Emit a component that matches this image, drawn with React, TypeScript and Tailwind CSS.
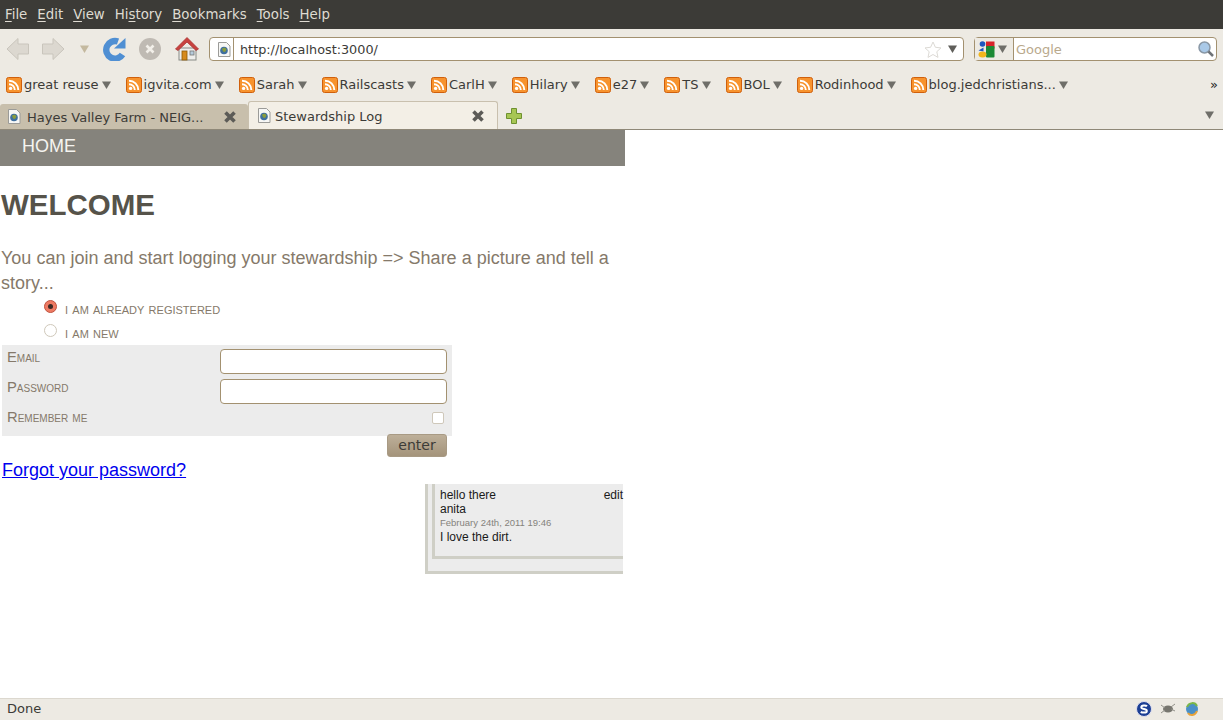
import { ReactNode } from "react";

const uiFont = "font-['DejaVu_Sans',sans-serif]";

const menus: [string, string, string][] = [
  ["", "F", "ile"],
  ["", "E", "dit"],
  ["", "V", "iew"],
  ["Hi", "s", "tory"],
  ["", "B", "ookmarks"],
  ["", "T", "ools"],
  ["", "H", "elp"],
];

const feeds = [
  "great reuse",
  "igvita.com",
  "Sarah",
  "Railscasts",
  "CarlH",
  "Hilary",
  "e27",
  "TS",
  "BOL",
  "Rodinhood",
  "blog.jedchristians...",
];

function Caret({ className = "" }: { className?: string }) {
  return (
    <svg width="9" height="8" viewBox="0 0 9 8" className={className}>
      <path d="M0 0.5h9L4.5 8z" fill="currentColor" />
    </svg>
  );
}

function FeedIcon() {
  return (
    <svg width="16" height="16" viewBox="0 0 16 16" className="shrink-0">
      <rect x="0.5" y="0.5" width="15" height="15" rx="2" fill="#f7932e" stroke="#d0600c" />
      <circle cx="4.6" cy="11.4" r="1.7" fill="#fff" />
      <path d="M3 7.2a5.800 5.800 0 0 1 5.800 5.800M3 3.700A9.300 9.300 0 0 1 12.300 13" fill="none" stroke="#fff" strokeWidth="1.900" />
    </svg>
  );
}

function PageIcon() {
  return (
    <svg width="14" height="15" viewBox="0 0 14 15" className="shrink-0">
      <path d="M1.500 0.500h8l3.500 3.500v10.500h-11.500z" fill="#f7f7f5" stroke="#9b9b98" />
      <circle cx="7" cy="8.500" r="3.800" fill="#3e6f9f" />
      <path d="M5 6.500l3-1 1.500 2-1.500 2.500-2-.5z" fill="#8a9d3a" />
    </svg>
  );
}

function CloseX({ className = "" }: { className?: string }) {
  return (
    <svg width="14" height="14" viewBox="0 0 14 14" className={className}>
      <path d="M2.500 2.500l9 9M11.500 2.500l-9 9" stroke="#5c5b57" strokeWidth="3.600" />
    </svg>
  );
}

function ArrowIcon({ flip = false }: { flip?: boolean }) {
  return (
    <svg width="24" height="24" viewBox="0 0 24 24" className={flip ? "scale-x-[-1]" : ""}>
      <path d="M1 12L12 1.500V7h10.500v10H12v5.500z" fill="#dcd8d0" stroke="#c9c5bc" />
    </svg>
  );
}

function ReloadIcon() {
  return (
    <svg width="24" height="24" viewBox="0 0 24 24">
      <path d="M19.500 17.500A8.800 8.800 0 1 1 15 4.500" fill="none" stroke="#4f8fd3" strokeWidth="6.400" />
      <path d="M11 11.500L22.500 11.500V1z" fill="#4f8fd3" />
    </svg>
  );
}

function StopIcon() {
  return (
    <svg width="22" height="22" viewBox="0 0 22 22">
      <circle cx="11" cy="11" r="11" fill="#bfbab3" />
      <path d="M7.500 7.500l7 7M14.500 7.500l-7 7" stroke="#f2efe9" strokeWidth="2.600" />
    </svg>
  );
}

function HomeIcon() {
  return (
    <svg width="24" height="24" viewBox="0 0 24 24">
      <rect x="4" y="11" width="17" height="12" fill="#eeeeec" stroke="#888a85" />
      <path d="M0.500 12L12 0.500 23.500 12l-2.500 1.500L12 5 3 13.500z" fill="#c8423f" stroke="#a33" strokeWidth="0.800" />
      <rect x="7" y="14" width="5" height="9" fill="#d68a1c" stroke="#8f5902" strokeWidth="0.800" />
      <rect x="15" y="14" width="4" height="4" fill="#b6cbdc" stroke="#777" strokeWidth="0.800" />
    </svg>
  );
}

function GoogleIcon() {
  return (
    <svg width="17" height="17" viewBox="0 0 17 17">
      <rect x="8" y="0.500" width="8.500" height="7" fill="#d8232a" />
      <rect x="8" y="5" width="8.500" height="11.500" rx="1" fill="#1c8a35" />
      <circle cx="4.500" cy="3" r="2.800" fill="#1f55c0" />
      <path d="M0.500 9.500l5-3v4z" fill="#1f55c0" />
      <ellipse cx="4.500" cy="13.500" rx="4" ry="3" fill="#f2b61d" />
    </svg>
  );
}

function SearchIcon() {
  return (
    <svg width="16" height="16" viewBox="0 0 16 16">
      <circle cx="6.500" cy="6.500" r="5.500" fill="#a9c9e8" stroke="#8a98a6" strokeWidth="1.500" />
      <path d="M10.500 10.500l4.500 4.500" stroke="#6f7378" strokeWidth="2.500" />
    </svg>
  );
}

function Tab({ title, active, children }: { title: string; active?: boolean; children?: ReactNode }) {
  return (
    <div
      className={
        active
          ? "flex h-[28px] w-[250px] items-center gap-[4px] self-end rounded-t-[3px] border-x border-t border-[#c9c0ae] bg-[#f3efe6] pl-[8px]"
          : "flex h-[25px] w-[248px] items-center gap-[6px] self-end rounded-t-[3px] bg-[#c8bfac] pl-[7px]"
      }
    >
      <PageIcon />
      <span className="flex-1 truncate pt-[2px] text-[13px] text-[#3c3b37]">{title}</span>
      {children}
    </div>
  );
}

function Field({ label }: { label: string }) {
  return (
    <div className="flex h-[30px] justify-between pl-[5px] pr-[5px]">
      <span className="text-[14.75px] leading-[24px] text-[#85796a] [font-variant:small-caps]">{label}</span>
      <input type="text" className="mt-[4px] h-[25px] w-[227px] rounded-[4px] border border-[#a39170] bg-white" />
    </div>
  );
}

export default function App() {
  return (
    <div className={`flex h-[720px] w-[1223px] flex-col overflow-hidden bg-white ${uiFont}`}>
      {/* Menu bar */}
      <div className="flex h-[29px] shrink-0 items-center gap-[10px] bg-[#3c3b37] pl-[5px] text-[13.33px] text-[#dfdbd2]">
        {menus.map(([pre, key, rest]) => (
          <span key={pre + key + rest}>
            {pre}
            <span className="underline decoration-1 underline-offset-2">{key}</span>
            {rest}
          </span>
        ))}
      </div>

      {/* Navigation toolbar */}
      <div className="flex h-[40px] shrink-0 items-center bg-[#edeae3] pl-[6px] pr-[6px]">
        <ArrowIcon />
        <div className="ml-[11px]">
          <ArrowIcon flip />
        </div>
        <Caret className="ml-[15px] text-[#c4b99f]" />
        <div className="ml-[14px]">
          <ReloadIcon />
        </div>
        <div className="ml-[12px]">
          <StopIcon />
        </div>
        <div className="ml-[14px]">
          <HomeIcon />
        </div>
        <div className="ml-[10px] flex h-[24px] w-[755px] items-center rounded-[4px] border border-[#a39170] bg-white pl-[7px] pr-[6px]">
          <PageIcon />
          <div className="ml-[2px] h-[22px] w-px bg-[#a39170]" />
          <span className="ml-[6px] flex-1 pt-[1px] text-[12.8px] text-[#3c3b37]">http://localhost:3000/</span>
          <svg width="18" height="17" viewBox="0 0 18 17" className="mr-[6px]">
            <path d="M9 1l2.400 5.300 5.600.6-4.200 3.800 1.200 5.700L9 13.500 4 16.400l1.200-5.700L1 6.900l5.600-.6z" fill="#fff" stroke="#dcdad5" />
          </svg>
          <Caret className="text-[#5f5e5a]" />
        </div>
        <div className="ml-[10px] flex h-[24px] flex-1 items-center rounded-[4px] border border-[#a39170] bg-white pr-[2px]">
          <div className="flex h-[22px] w-[38px] items-center gap-[3px] bg-[#edeae3] pl-[3px]">
            <GoogleIcon />
            <Caret className="text-[#6f6e69]" />
          </div>
          <div className="h-[22px] w-px bg-[#a39170]" />
          <span className="ml-[2px] flex-1 pt-[1px] text-[13px] text-[#b9a98c]">Google</span>
          <SearchIcon />
        </div>
      </div>

      {/* Bookmarks toolbar */}
      <div className="flex h-[31px] shrink-0 items-center bg-[#edeae3] pl-[6px] text-[13px] text-[#3c3b37]">
        {feeds.map((name) => (
          <div key={name} className="mr-[15px] flex items-center gap-[2px]">
            <FeedIcon />
            <span>{name}</span>
            <Caret className="ml-[1px] text-[#6f6e69]" />
          </div>
        ))}
        <span className="ml-auto mr-[5px] text-[13px] leading-none text-[#222]">»</span>
      </div>

      {/* Tab strip */}
      <div className="flex h-[30px] shrink-0 items-center border-b border-[#8f8878] bg-[#edeae3] pr-[9px]">
        <Tab title="Hayes Valley Farm - NEIG...">
          <CloseX className="mr-[11px]" />
        </Tab>
        <Tab title="Stewardship Log" active>
          <CloseX className="mr-[12px]" />
        </Tab>
        <svg width="16" height="16" viewBox="0 0 16 16" className="ml-[8px] mt-[2px]">
          <path d="M5.500 0.500h5v5h5v5h-5v5h-5v-5h-5v-5h5z" fill="#a7c653" stroke="#6e9130" />
        </svg>
        <Caret className="ml-auto text-[#6f6e69]" />
      </div>

      {/* Page content */}
      <div className="flex-1 font-['Liberation_Sans',sans-serif]">
        <div className="w-[625px]">
          <div className="flex h-[36px] items-center bg-[#85837c] pb-[4px] pl-[22px] text-[18px] text-[#f5f4f0]">HOME</div>
          <h1 className="ml-[1px] mt-[21px] text-[29.5px] font-bold leading-[36px] text-[#56534a]">WELCOME</h1>
          <p className="ml-[1px] mt-[23px] text-[18px] leading-[25px] text-[#85796a]">
            You can join and start logging your stewardship =&gt; Share a picture and tell a story...
          </p>

          <div className="ml-[44px] mt-[3px] flex h-[24px] items-center gap-[8px] text-[15.25px] text-[#85796a] [font-variant:small-caps]">
            <span className="-mt-[9px] flex size-[13px] items-center justify-center rounded-full border border-[#c0533f] bg-[#ee7a63]">
              <span className="size-[5px] rounded-full bg-[#3c2a25]" />
            </span>
            <span className="-mt-[4px]">i am already registered</span>
          </div>
          <div className="ml-[44px] flex h-[24px] items-center gap-[8px] text-[15.25px] text-[#85796a] [font-variant:small-caps]">
            <span className="-mt-[9px] size-[13px] rounded-full border border-[#cfc8ba] bg-white" />
            <span className="-mt-[4px]">i am new</span>
          </div>

          <div className="ml-[2px] mt-[-2px] h-[91px] w-[450px] bg-[#ececec]">
            <Field label="Email" />
            <Field label="Password" />
            <div className="flex h-[30px] justify-between pl-[5px] pr-[8px]">
              <span className="text-[14.75px] leading-[24px] text-[#85796a] [font-variant:small-caps]">Remember me</span>
              <span className="mt-[7px] size-[12px] rounded-[2px] border border-[#cfc8ba] bg-white" />
            </div>
          </div>
          <div className="flex w-[447px] justify-end">
            <button className="-mt-[2px] h-[23px] w-[60px] rounded-[3px] border border-[#a89a84] bg-gradient-to-b from-[#bdaf99] to-[#a4947b] pb-[2px] font-['DejaVu_Sans',sans-serif] text-[14px] leading-none text-[#3c3b37]">
              enter
            </button>
          </div>
          <a href="#" className="ml-[2px] mt-[1px] block text-[18px] leading-[24px] text-[#0000ee] underline">
            Forgot your password?
          </a>

          {/* Comment */}
          <div className="ml-[425px] mt-[2px] h-[90px] w-[198px] border-b-[3px] border-l-[3px] border-[#cfcfc6] bg-[#ececec]">
            <div className="ml-[4px] h-[75px] border-b-[3px] border-l-[3px] border-[#cfcfc6] pl-[5px] pt-[4px] text-[12px] leading-[14px] text-[#1a1a1a]">
              <div className="flex justify-between">
                <span>hello there</span>
                <span>edit</span>
              </div>
              <div>anita</div>
              <div className="text-[9.500px] leading-[14px] text-[#85837c]">February 24th, 2011 19:46</div>
              <div>I love the dirt.</div>
            </div>
          </div>
        </div>
      </div>

      {/* Status bar */}
      <div className="flex h-[22px] shrink-0 items-center border-t border-[#dcd8cf] bg-[#edeae3] pb-[2px] pl-[7px] pr-[23px] text-[13px] text-[#3c3b37]">
        <span className="flex-1">Done</span>
        <div className="flex items-center gap-[8px]">
          <svg width="16" height="16" viewBox="0 0 16 16">
            <circle cx="8" cy="8" r="7.500" fill="#1c3f94" stroke="#dde" />
            <path d="M11 5.200C10 4.200 5.300 4 5.300 6.300c0 2.400 5.500 1.200 5.500 3.600 0 2.300-4.700 2-6 .8" fill="none" stroke="#fff" strokeWidth="2" />
          </svg>
          <svg width="16" height="14" viewBox="0 0 16 14">
            <ellipse cx="8" cy="7" rx="5" ry="3.500" fill="#77766f" />
            <path d="M1 3l4 3M1 11l4-3M15 2l-4 3M15 9l-4-2" stroke="#8f8e87" />
          </svg>
          <svg width="16" height="16" viewBox="0 0 16 16">
            <circle cx="8" cy="8" r="6" fill="#4a90c8" />
            <path d="M3 6c2-5 8-5 10-1" fill="none" stroke="#7ab648" strokeWidth="2" />
            <path d="M13 10c-2 5-7 5-9 2" fill="none" stroke="#e8a33a" strokeWidth="2" />
          </svg>
        </div>
      </div>
    </div>
  );
}
